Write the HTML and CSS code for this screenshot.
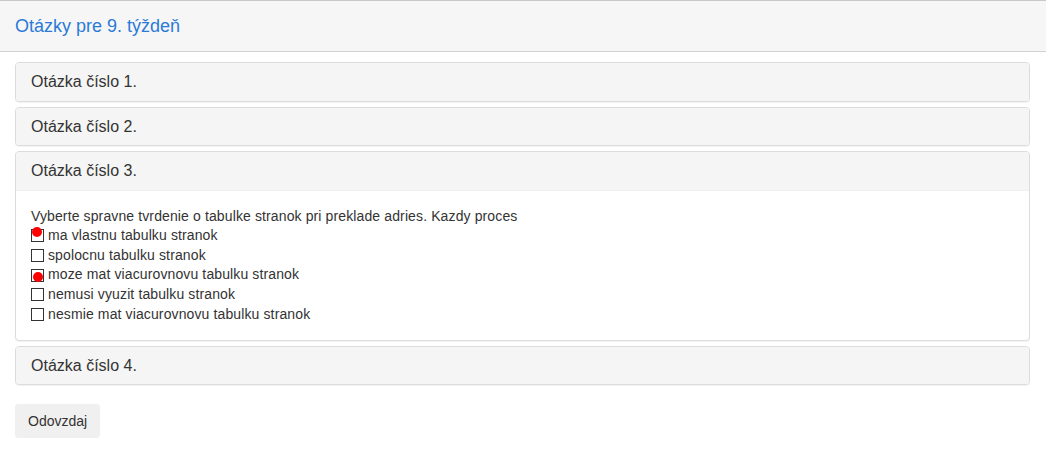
FILE: index.html
```html
<!DOCTYPE html>
<html>
<head>
<meta charset="utf-8">
<link rel="stylesheet" href="styles.css">
</head>
<body>
<div class="topbar"><h1 class="title">Otázky pre 9. týždeň</h1></div>
<div class="content">
  <div class="panels">
    <div class="panel"><div class="panel-heading">Otázka číslo 1.</div></div>
    <div class="panel"><div class="panel-heading">Otázka číslo 2.</div></div>
    <div class="panel">
      <div class="panel-heading">Otázka číslo 3.</div>
      <div class="panel-body">
        <div class="question">Vyberte spravne tvrdenie o tabulke stranok pri preklade adries. Kazdy proces</div>
        <label class="option"><span class="box"><span class="dot dot-top"></span></span>ma vlastnu tabulku stranok</label>
        <label class="option"><span class="box"></span>spolocnu tabulku stranok</label>
        <label class="option"><span class="box"><span class="dot dot-bottom"></span></span>moze mat viacurovnovu tabulku stranok</label>
        <label class="option"><span class="box"></span>nemusi vyuzit tabulku stranok</label>
        <label class="option"><span class="box"></span>nesmie mat viacurovnovu tabulku stranok</label>
      </div>
    </div>
    <div class="panel"><div class="panel-heading">Otázka číslo 4.</div></div>
  </div>
  <button class="btn">Odovzdaj</button>
</div>
</body>
</html>
```

FILE: styles.css
```css
* { box-sizing: border-box; }
body {
  margin: 0;
  font-family: "Liberation Sans", Arial, sans-serif;
  font-size: 14px;
  color: #333;
  background: #fff;
}
.topbar {
  background: #f6f6f6;
  border-top: 1px solid #c8c8c8;
  border-bottom: 1px solid #d2d2d2;
  height: 52px;
  padding: 0 15px;
  display: flex;
  align-items: center;
}
.title {
  margin: 0;
  font-size: 18px;
  font-weight: normal;
  color: #2a7ad8;
}
.content {
  padding: 10px 16px 0 15px;
}
.panels {
  display: flex;
  flex-direction: column;
  gap: 5px;
}
.panel {
  border: 1px solid #dcdcdc;
  border-radius: 4px;
  background: #fff;
  box-shadow: 0 1px 1px rgba(0,0,0,0.05);
  overflow: hidden;
}
.panel-heading {
  background: #f5f5f5;
  padding: 10px 15px;
  font-size: 16px;
  line-height: 17.6px;
  color: #333;
}
.panel-body {
  padding: 15px 15px 15px 15px;
  border-top: 1px solid #f0f0f0;
  letter-spacing: 0.12px;
}
.question {
  line-height: 20px;
}
.option {
  display: flex;
  align-items: center;
  height: 19.75px;
  line-height: 19.75px;
}
.box {
  position: relative;
  width: 13px;
  height: 13px;
  border: 1px solid #333;
  background: #fff;
  margin-right: 4px;
  flex: none;
}
.dot {
  position: absolute;
  width: 10px;
  height: 10px;
  border-radius: 50%;
  background: #f00;
}
.dot-top { left: 0px; top: -3px; }
.dot-bottom { left: 1px; top: 2px; }
.btn {
  margin-top: 19px;
  font-family: "Liberation Sans", Arial, sans-serif;
  font-size: 14px;
  color: #333;
  background: #f0f0f0;
  border: 1px solid #f0f0f0;
  border-radius: 3px;
  height: 34px;
  padding: 6px 12px;
}
```
